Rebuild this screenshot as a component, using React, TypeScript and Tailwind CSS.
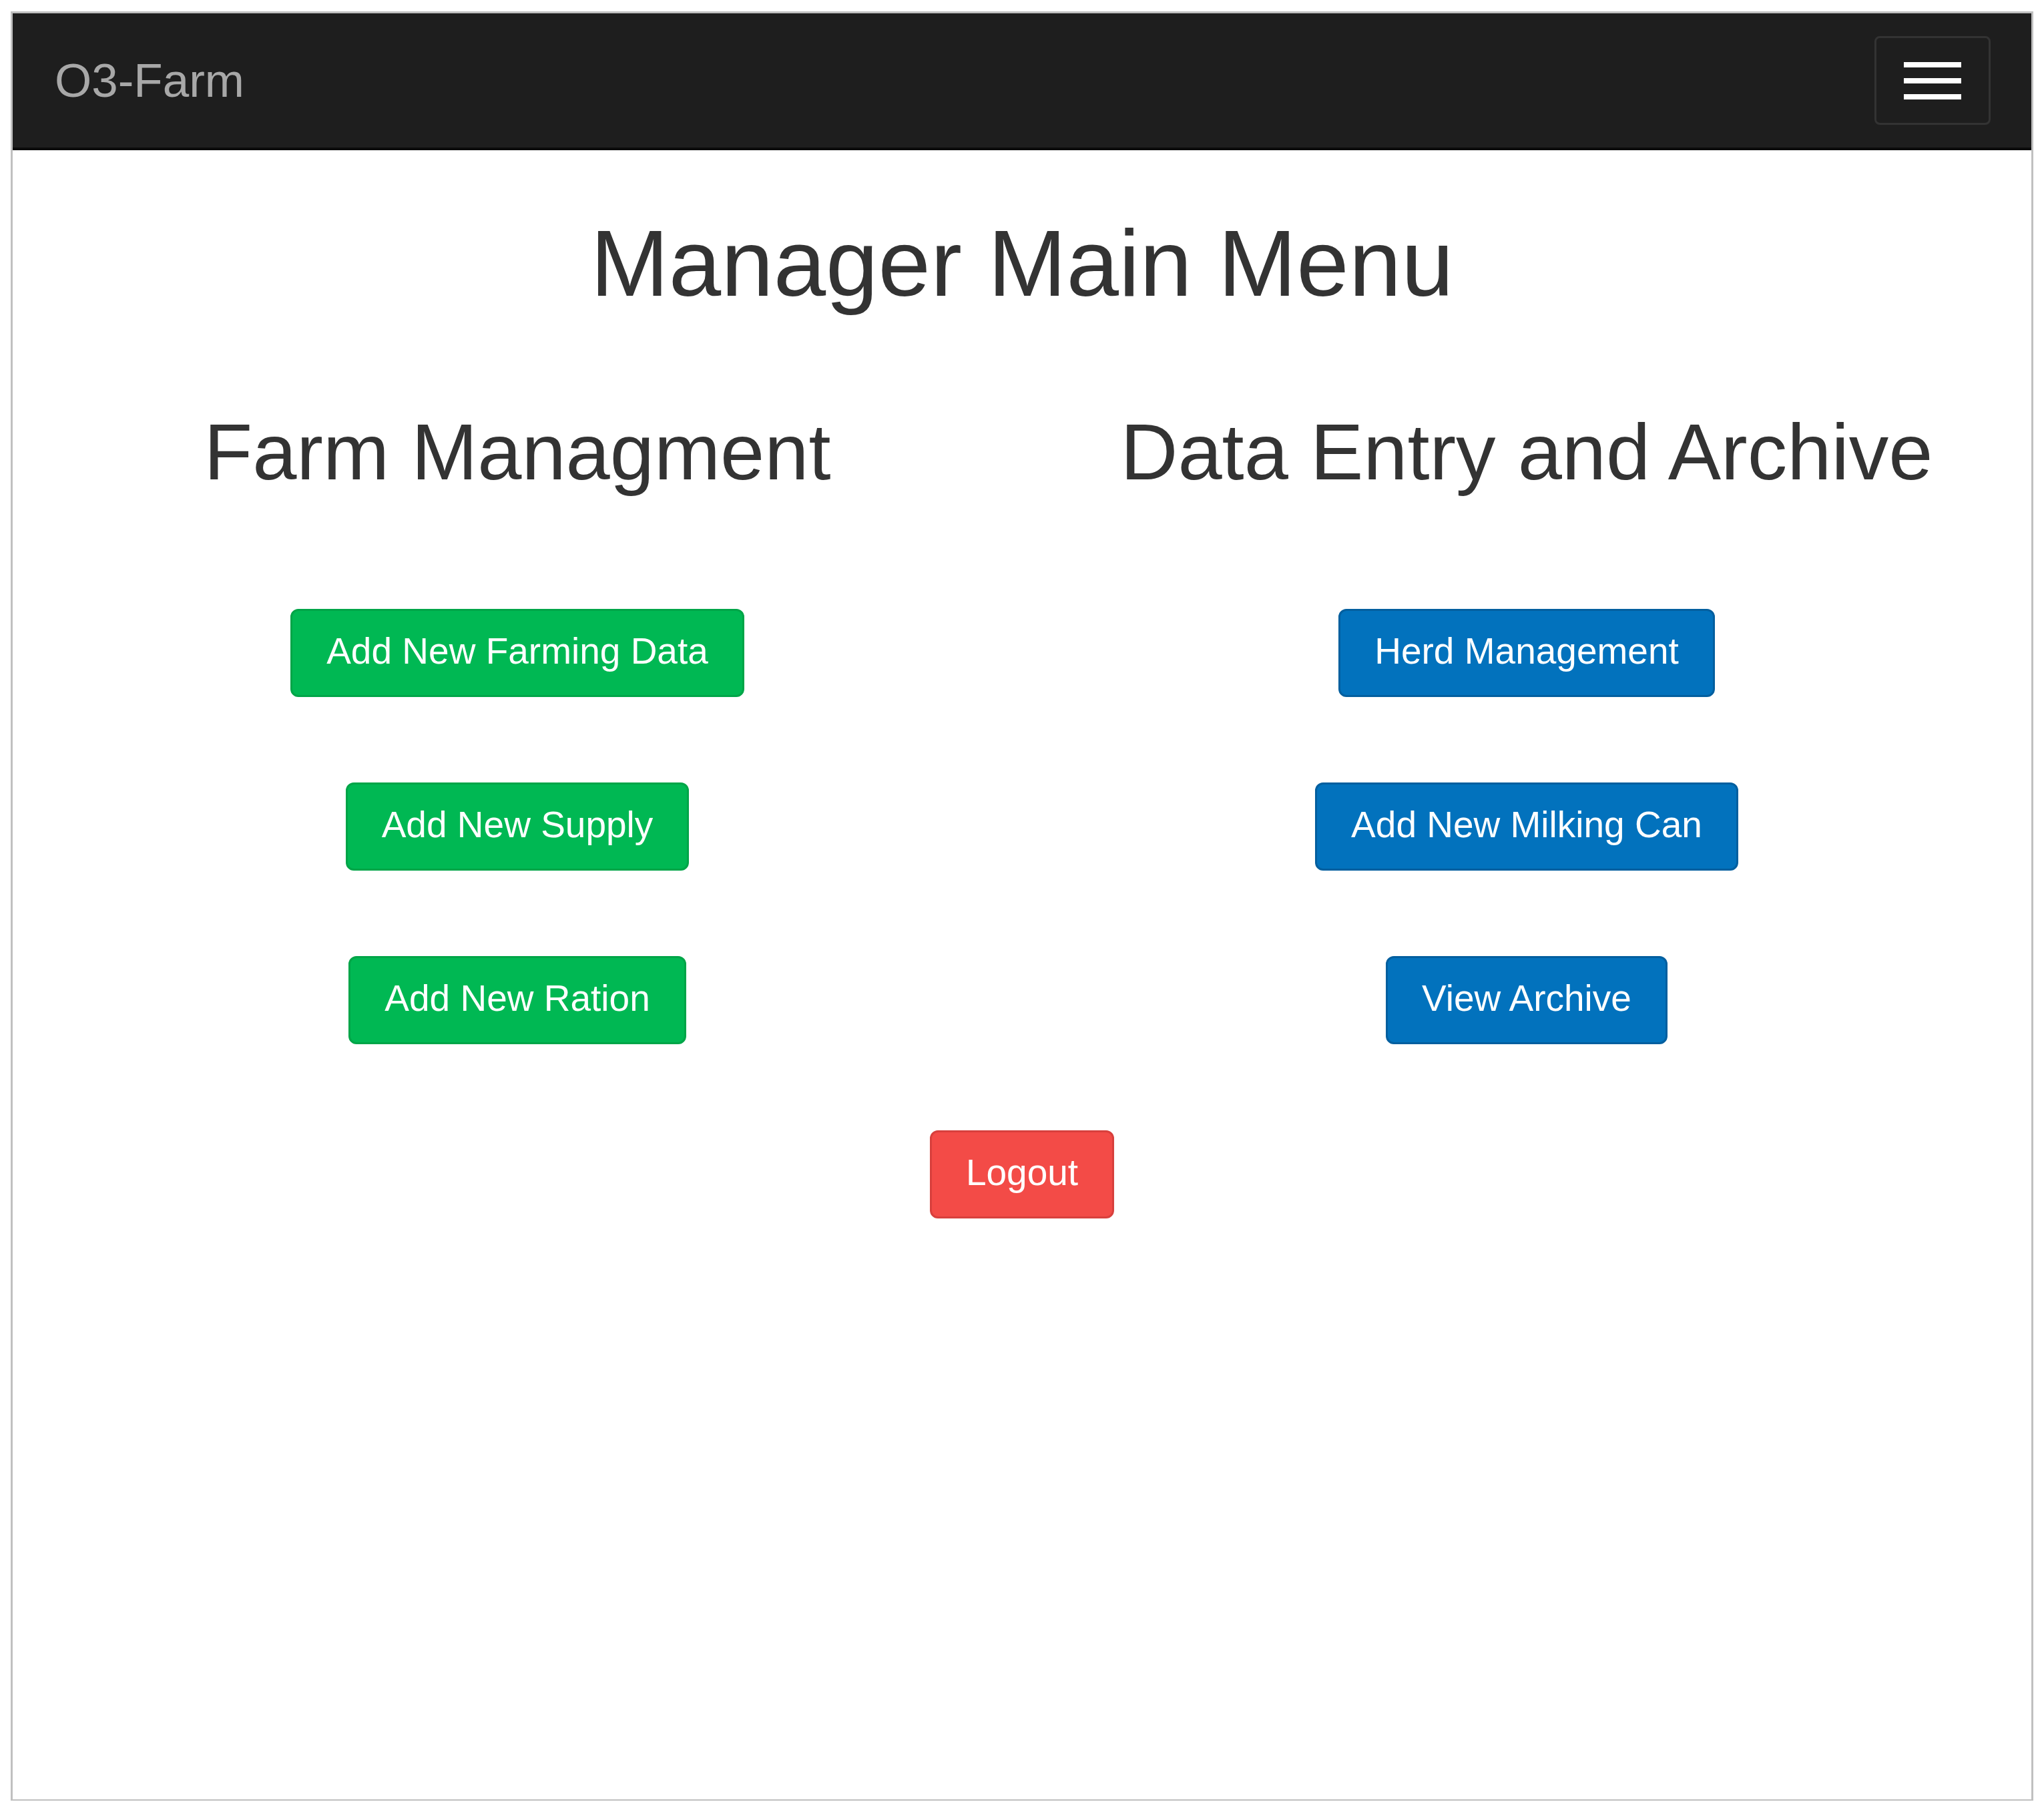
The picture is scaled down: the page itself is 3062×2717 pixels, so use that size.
const font = "font-['Liberation_Sans',Arial,sans-serif]";

type Tone = 'green' | 'blue' | 'red';

const toneClass: Record<Tone, string> = {
  green: 'bg-[#00b853] border-[#00a548]',
  blue: 'bg-[#0272bd] border-[#035f9f]',
  red: 'bg-[#f34b47] border-[#d8403d]',
};

const MenuButton: React.FC<{ label: string; tone: Tone }> = ({ label, tone }) => (
  <button
    className={
      `h-[132px] px-[51px] pb-[5px] flex items-center rounded-[12px] border-[3px] ` +
      `text-white text-[55px] leading-none ${toneClass[tone]}`
    }
  >
    {label}
  </button>
);

const farmButtons = ['Add New Farming Data', 'Add New Supply', 'Add New Ration'];
const dataButtons = ['Herd Management', 'Add New Milking Can', 'View Archive'];

export default function App() {
  return (
    <div className={`bg-white pt-[17px] px-[16px] pb-[20px] ${font}`}>
      <div className="h-[2680px] border-x-[3px] border-t-[3px] border-b-[2px] border-[#c0c0c0] flex flex-col">
        {/* navbar */}
        <nav className="h-[205px] shrink-0 bg-[#1e1e1e] border-b-4 border-[#0b0b0b] flex items-center justify-between pl-[63px] pr-[61px]">
          <span className="text-[71px] leading-none text-[#a8a8a8]">O3-Farm</span>
          <button className="w-[174px] h-[133px] rounded-[8px] border-[3px] border-[#333] flex flex-col items-center justify-center gap-[16px]">
            <span className="block w-[86px] h-[8px] bg-white" />
            <span className="block w-[86px] h-[8px] bg-white" />
            <span className="block w-[86px] h-[8px] bg-white" />
          </button>
        </nav>

        <main className="flex flex-col items-center">
          <h1 className="mt-[99px] text-[141px] leading-none text-[#333]">Manager Main Menu</h1>

          <div className="w-full grid grid-cols-2 mt-[152px]">
            <div className="flex flex-col items-center">
              <h2 className="text-[119px] leading-none text-[#333]">Farm Managment</h2>
              <div className="mt-[176px] flex flex-col items-center gap-[128px]">
                {farmButtons.map((b) => (
                  <MenuButton key={b} label={b} tone="green" />
                ))}
              </div>
            </div>
            <div className="flex flex-col items-center">
              <h2 className="text-[119px] leading-none text-[#333]">Data Entry and Archive</h2>
              <div className="mt-[176px] flex flex-col items-center gap-[128px]">
                {dataButtons.map((b) => (
                  <MenuButton key={b} label={b} tone="blue" />
                ))}
              </div>
            </div>
          </div>

          <div className="mt-[129px]">
            <MenuButton label="Logout" tone="red" />
          </div>
        </main>
      </div>
    </div>
  );
}
